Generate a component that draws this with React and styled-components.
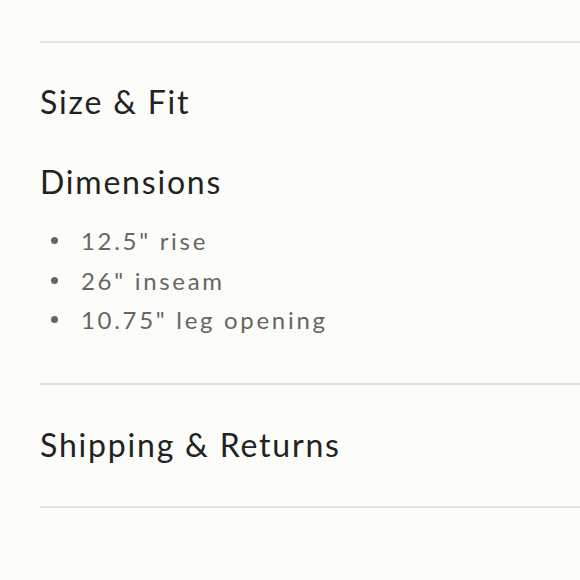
import React from "react";
import styled, { createGlobalStyle } from "styled-components";

const Global = createGlobalStyle`
  html, body { margin: 0; padding: 0; background: #fcfcf9; }
  body { font-family: Lato, "Open Sans", sans-serif; color: #222; }
`;

const Page = styled.div`
  padding: 41px 0 0 40px;
`;

const Section = styled.section`
  border-top: 2px solid #e3e3e0;
  padding: ${(p) => p.$pad || "38px 0 38px"};
  &:last-child { border-bottom: 2px solid #e3e3e0; }
`;

const Title = styled.h2`
  margin: 0;
  font-size: 32px;
  line-height: 36px;
  font-weight: 400;
  letter-spacing: 1.8px;
  color: #222;
`;

const SubTitle = styled.h3`
  margin: 44px 0 0;
  font-size: 32px;
  line-height: 36px;
  font-weight: 400;
  letter-spacing: 1.8px;
  color: #222;
`;

const List = styled.ul`
  margin: 21px 0 0;
  padding: 0;
  list-style: none;
`;

const Item = styled.li`
  display: flex;
  align-items: center;
  font-size: 24px;
  line-height: 39.5px;
  letter-spacing: 2.7px;
  color: #666;
  &::before {
    content: "";
    width: 7px;
    height: 7px;
    border-radius: 50%;
    background: #666;
    margin: 0 23px 0 11px;
    flex: none;
  }
`;

export default function App() {
  return (
    <>
      <Global />
      <Page>
        <Section $pad="41px 0 43px">
          <Title>Size &amp; Fit</Title>
          <SubTitle>Dimensions</SubTitle>
          <List>
            <Item>12.5" rise</Item>
            <Item>26" inseam</Item>
            <Item>10.75" leg opening</Item>
          </List>
        </Section>
        <Section $pad="42px 0 43px">
          <Title>Shipping &amp; Returns</Title>
        </Section>
      </Page>
    </>
  );
}
